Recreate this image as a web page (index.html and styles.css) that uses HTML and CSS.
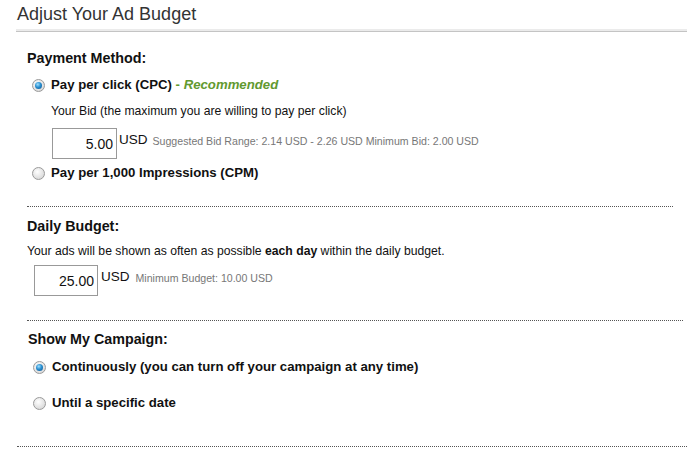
FILE: index.html
```html
<!DOCTYPE html>
<html lang="en">
<head>
    <meta charset="UTF-8">
    <title>Adjust Your Ad Budget</title>
    <link rel="stylesheet" href="styles.css">
</head>
<body>
    <div class="budget-page">
        <h1 class="page-title">Adjust Your Ad Budget</h1>

        <div class="section section-payment">
            <h2>Payment Method:</h2>

            <label class="option">
                <input type="radio" name="method" checked>
                <span class="option-text">Pay per click (CPC) <span class="recommended">- <em>Recommended</em></span></span>
            </label>
            <div class="bid-block">
                <p class="hint">Your Bid (the maximum you are willing to pay per click)</p>
                <div class="amount-row">
                    <input type="text" class="amount bid-amount" value="5.00">
                    <span class="currency">USD</span>
                    <span class="note">Suggested Bid Range: 2.14 USD - 2.26 USD Minimum Bid: 2.00 USD</span>
                </div>
            </div>

            <label class="option option-cpm">
                <input type="radio" name="method">
                <span class="option-text">Pay per 1,000 Impressions (CPM)</span>
            </label>
        </div>

        <div class="section section-daily">
            <h2>Daily Budget:</h2>
            <p class="hint">Your ads will be shown as often as possible <b>each day</b> within the daily budget.</p>
            <div class="amount-row daily-row">
                <input type="text" class="amount budget-amount" value="25.00">
                <span class="currency">USD</span>
                <span class="note">Minimum Budget: 10.00 USD</span>
            </div>
        </div>

        <div class="section section-show">
            <h2>Show My Campaign:</h2>
            <label class="option">
                <input type="radio" name="show" checked>
                <span class="option-text">Continuously (you can turn off your campaign at any time)</span>
            </label>
            <label class="option">
                <input type="radio" name="show">
                <span class="option-text">Until a specific date</span>
            </label>
        </div>
    </div>
</body>
</html>
```

FILE: styles.css
```css
body {
    margin: 0;
    background-color: #fff;
    font-family: "Liberation Sans", Arial, sans-serif;
    color: #111;
}

.budget-page {
    width: 687px;
}

.page-title {
    margin: 0 0 0 16px;
    padding: 4px 0 6px 1px;
    font-size: 18px;
    font-weight: normal;
    color: #333;
    line-height: 21px;
    border-bottom: 1px solid #c4c4c4;
    box-shadow: 0 -2px 0 #ebebeb inset;
}

.section {
    border-bottom: 1px dotted #555;
}

.section h2 {
    margin: 0;
    font-size: 14.3px;
    font-weight: bold;
    line-height: 18px;
}

/* Payment Method */
.section-payment {
    margin: 0 14px 0 27px;
    padding: 17px 0 24px;
}

.section-daily {
    margin: 0 4px 0 27px;
    padding: 10px 0 24px;
}

.section-show {
    margin: 0 0 0 17px;
    padding: 9px 0 34px 11px;
}

.option {
    display: flex;
    align-items: center;
    gap: 6px;
    margin-top: 9px;
    padding-left: 5px;
    font-size: 13.2px;
    font-weight: bold;
    line-height: 18px;
}

.option-cpm {
    margin-top: 5px;
}

.section-show .option {
    margin-top: 10px;
}

.section-show .option + .option {
    margin-top: 18px;
}

.option input {
    appearance: none;
    width: 13px;
    height: 13px;
    margin: 0;
    border-radius: 50%;
    border: 1px solid #9a9a9a;
    background: radial-gradient(circle at 40% 35%, #fff 0%, #e4e4e4 55%, #cfcfcf 100%);
    position: relative;
}

.option input:checked::after {
    content: "";
    position: absolute;
    left: 2px;
    top: 2px;
    width: 7px;
    height: 7px;
    border-radius: 50%;
    background: radial-gradient(circle at 40% 35%, #9fe0ff 0%, #2a8fd0 45%, #0b4f8a 100%);
}

.recommended {
    color: #62992f;
}

.recommended em {
    font-style: italic;
}

.bid-block {
    padding-left: 24px;
}

.hint {
    margin: 10px 0 0;
    font-size: 12.2px;
    line-height: 15px;
}

.section-daily .hint {
    margin-top: 9px;
}

.amount-row {
    display: flex;
    align-items: center;
    gap: 2px;
    margin-top: 9px;
}

.amount {
    box-sizing: border-box;
    height: 31px;
    padding: 0 3px;
    border: 1px solid #999;
    font-family: "Liberation Sans", Arial, sans-serif;
    font-size: 14px;
    text-align: right;
    color: #111;
}

.bid-amount {
    width: 65px;
    margin-left: 1px;
}

.budget-amount {
    width: 64px;
}

.daily-row {
    margin-left: 7px;
    margin-top: 6px;
    gap: 3px;
}

.currency {
    align-self: flex-start;
    margin-top: 4px;
    font-size: 13.5px;
}

.note {
    margin-left: 3px;
    font-size: 10.6px;
    color: #777;
    align-self: flex-start;
    margin-top: 7px;
}
```
